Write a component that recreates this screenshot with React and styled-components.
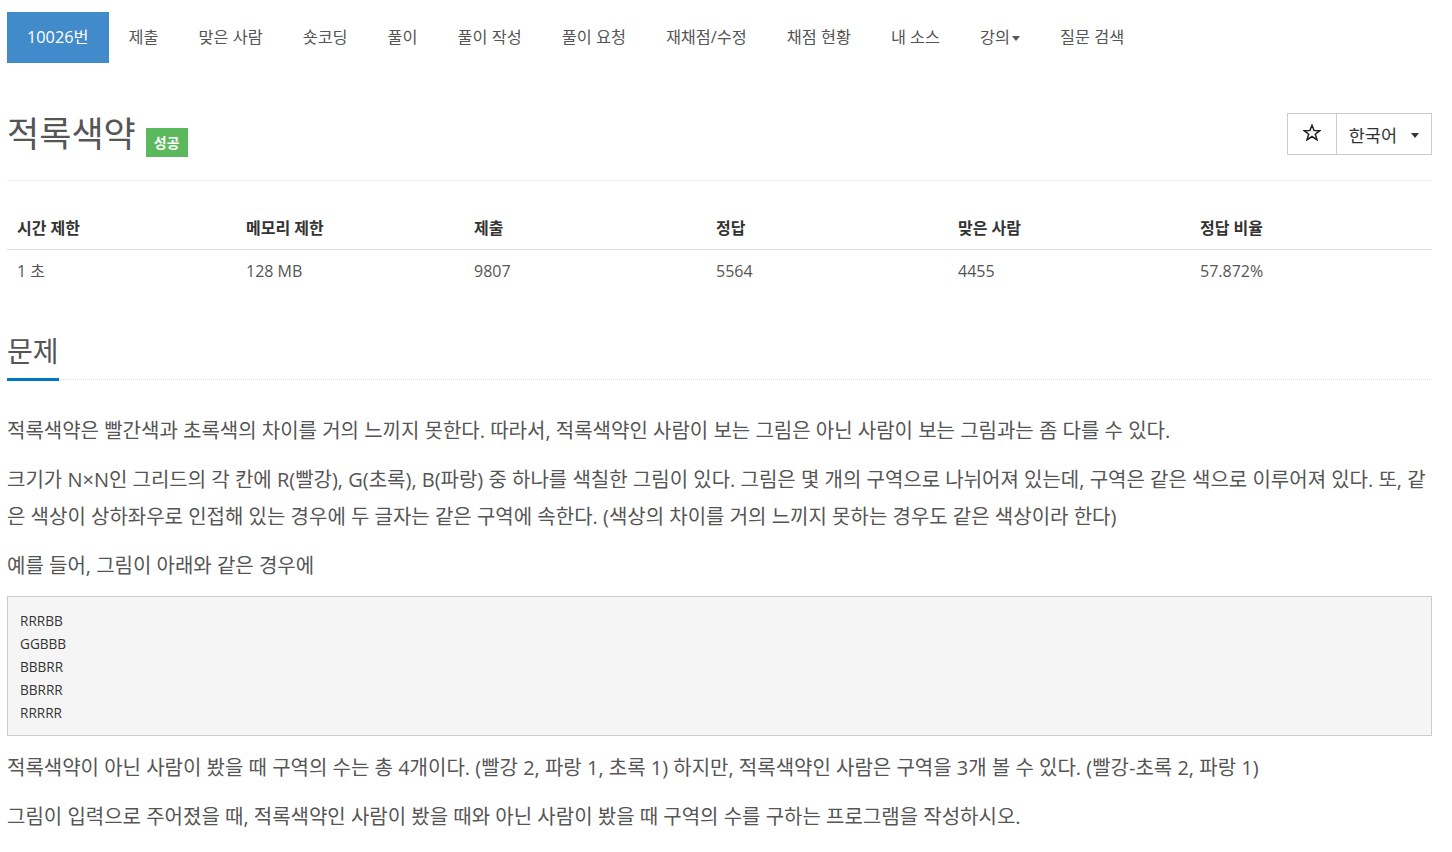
import React from 'react';
import styled, {createGlobalStyle} from 'styled-components';

const GlobalStyle=createGlobalStyle`
    body{
        margin:0;
        background:#fff;
        font-family:"Open Sans","Noto Sans CJK KR",sans-serif;
        color:#555;
    }
`;

const Page=styled.div`
    width:1425px;
    margin-left:7px;
    padding-bottom:40px;
`;

const Nav=styled.ul`
    list-style:none;
    margin:12px 0 0;
    padding:0;
    display:flex;
`;

const NavItem=styled.li`
    padding:15px 20px;
    font-size:16.3px;
    line-height:21px;
    color:${({active})=>active?'#fff':'#555'};
    background:${({active})=>active?'#428bca':'transparent'};
    display:flex;
    align-items:center;
    gap:2px;
    cursor:pointer;
`;

const Caret=styled.span`
    display:inline-block;
    width:0;
    height:0;
    border-top:5px solid ${({color})=>color||'#555'};
    border-left:4px solid transparent;
    border-right:4px solid transparent;
    margin-top:2px;
`;

const Header=styled.div`
    display:flex;
    justify-content:space-between;
    align-items:flex-start;
    margin-top:50px;
    padding-bottom:23px;
    border-bottom:1px solid #eee;
`;

const Title=styled.h1`
    margin:0;
    display:flex;
    align-items:flex-start;
    gap:10px;
    font-size:35px;
    font-weight:400;
    line-height:42px;
    color:#555;
`;

const Badge=styled.span`
    margin-top:15px;
    background:#5cb85c;
    color:#fff;
    font-size:14px;
    font-weight:600;
    line-height:19px;
    padding:5px 8px;
`;

const ButtonGroup=styled.div`
    display:flex;
    border:1px solid #ccc;
    height:40px;
`;

const GroupButton=styled.div`
    display:flex;
    align-items:center;
    gap:${({gap})=>gap||0}px;
    padding:0 ${({px})=>px||15}px;
    font-size:${({size})=>size||16}px;
    color:#333;
    & + &{
        border-left:1px solid #ccc;
    }
`;

const StarIcon=styled.svg`
    width:18px;
    height:17px;
    margin-top:-4px;
`;

const Stats=styled.div`
    display:grid;
    grid-template-columns:229px 228px repeat(4,1fr);
    margin-top:26px;
`;

const HeadCell=styled.div`
    padding:10px;
    font-size:16px;
    line-height:22px;
    font-weight:700;
    color:#333;
    border-bottom:1px solid #ddd;
`;

const Cell=styled.div`
    padding:10px;
    font-size:16px;
    line-height:22px;
    color:#555;
`;

const Headline=styled.div`
    margin-top:44px;
    border-bottom:1px dotted #ddd;
    display:flex;
`;

const HeadlineText=styled.h2`
    margin:0 0 -2px;
    font-size:28px;
    font-weight:400;
    line-height:31px;
    color:#555;
    padding-bottom:11px;
    border-bottom:3px solid #0076c0;
`;

const Description=styled.div`
    margin-top:32px;
`;

const Para=styled.p`
    margin:0 0 12px;
    font-size:20px;
    line-height:37px;
    color:#555;
    word-break:break-all;
`;

const Pre=styled.pre`
    margin:0 0 13px;
    padding:12px 12px 11px;
    background:#f5f5f5;
    border:1px solid #ccc;
    font-family:"Open Sans","Noto Sans CJK KR",sans-serif;
    font-size:13.6px;
    line-height:23px;
    color:#333;
    white-space:pre;
`;

const navItems=['제출','맞은 사람','숏코딩','풀이','풀이 작성','풀이 요청','재채점/수정','채점 현황','내 소스'];

const stats=[
    ['시간 제한','1 초'],
    ['메모리 제한','128 MB'],
    ['제출','9807'],
    ['정답','5564'],
    ['맞은 사람','4455'],
    ['정답 비율','57.872%'],
];

const App=()=>{
  return (
    <>
    <GlobalStyle/>
    <Page>
      <Nav>
        <NavItem active>10026번</NavItem>
        {navItems.map((item)=>(
          <NavItem key={item}>{item}</NavItem>
        ))}
        <NavItem>강의<Caret/></NavItem>
        <NavItem>질문 검색</NavItem>
      </Nav>

      <Header>
        <Title>
          적록색약
          <Badge>성공</Badge>
        </Title>
        <ButtonGroup>
          <GroupButton px={15}>
            <StarIcon viewBox="0 0 18 17">
              <path d="M9 1.2 L11.1 6.6 L16.8 6.7 L12.3 10.2 L14 15.8 L9 12.5 L4 15.8 L5.7 10.2 L1.2 6.7 L6.9 6.6 Z" fill="none" stroke="#222" strokeWidth="1.5" strokeLinejoin="miter"/>
            </StarIcon>
          </GroupButton>
          <GroupButton px={12} gap={14} size={17.5}>한국어<Caret color="#333"/></GroupButton>
        </ButtonGroup>
      </Header>

      <Stats>
        {stats.map(([h])=>(<HeadCell key={h}>{h}</HeadCell>))}
        {stats.map(([h,v])=>(<Cell key={h+'v'}>{v}</Cell>))}
      </Stats>

      <Headline>
        <HeadlineText>문제</HeadlineText>
      </Headline>

      <Description>
        <Para>적록색약은 빨간색과 초록색의 차이를 거의 느끼지 못한다. 따라서, 적록색약인 사람이 보는 그림은 아닌 사람이 보는 그림과는 좀 다를 수 있다.</Para>
        <Para>크기가 N×N인 그리드의 각 칸에 R(빨강), G(초록), B(파랑) 중 하나를 색칠한 그림이 있다. 그림은 몇 개의 구역으로 나뉘어져 있는데, 구역은 같은 색으로 이루어져 있다. 또, 같은 색상이 상하좌우로 인접해 있는 경우에 두 글자는 같은 구역에 속한다. (색상의 차이를 거의 느끼지 못하는 경우도 같은 색상이라 한다)</Para>
        <Para>예를 들어, 그림이 아래와 같은 경우에</Para>
        <Pre>{`RRRBB
GGBBB
BBBRR
BBRRR
RRRRR`}</Pre>
        <Para>적록색약이 아닌 사람이 봤을 때 구역의 수는 총 4개이다. (빨강 2, 파랑 1, 초록 1) 하지만, 적록색약인 사람은 구역을 3개 볼 수 있다. (빨강-초록 2, 파랑 1)</Para>
        <Para>그림이 입력으로 주어졌을 때, 적록색약인 사람이 봤을 때와 아닌 사람이 봤을 때 구역의 수를 구하는 프로그램을 작성하시오.</Para>
      </Description>
    </Page>
    </>
  )
}
export default App
